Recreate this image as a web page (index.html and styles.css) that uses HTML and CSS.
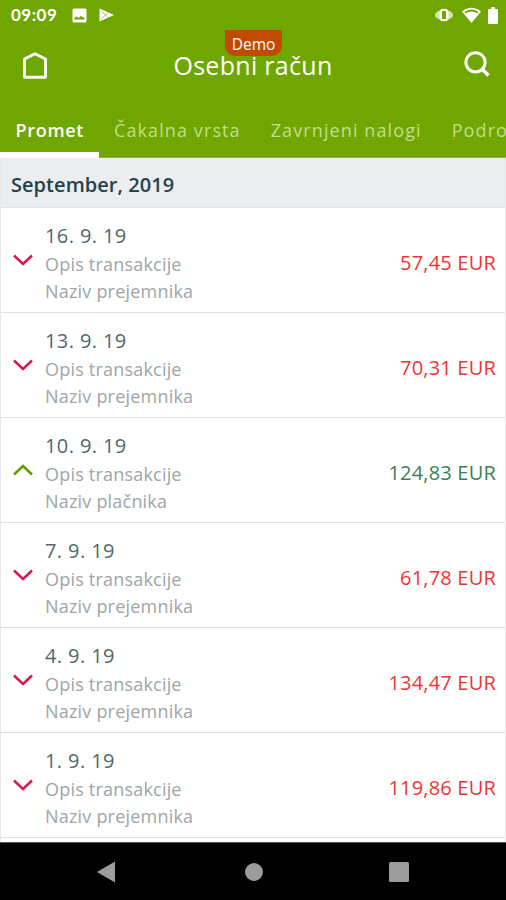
FILE: index.html
```html
<!DOCTYPE html>
<html lang="sl">
<head>
<meta charset="utf-8">
<title>Osebni račun</title>
<link rel="stylesheet" href="styles.css">
</head>
<body>
<header class="top">
  <div class="status">
    <span class="time">09:09</span>
    <svg class="pic" width="15" height="15" viewBox="0 0 15 15"><rect x=".5" y=".5" width="14" height="14" rx="1.5" fill="#fff"/><path d="M2.500 11.500V9.500l2-1 2 1.500 2.500-2 3.500 2v1.500z" fill="#70a600"/></svg>
    <svg class="play" width="15" height="14" viewBox="0 0 15 14"><path d="M.5.500 15 7 .5 13.500z" fill="#fff"/><path d="M2 2.500 9 9.500M2 11.500 9 4.500" stroke="#70a600" stroke-width=".9" opacity=".7"/></svg>
    <svg class="vib" width="18" height="14" viewBox="0 0 18 14"><path d="M5 2.500Q0 4 0 7t5 4.500zM13 2.500Q18 4 18 7t-5 4.500z" fill="#cfe2a8"/><rect x="4.500" y=".8" width="9" height="12.400" rx="3.500" fill="#fff"/><rect x="7" y="3" width="4" height="8" rx=".5" fill="#70a600"/></svg>
    <svg class="wifi" width="19" height="16" viewBox="0 0 19 16"><path d="M0 4.500Q9.500-3 19 4.500L9.500 16z" fill="#fff"/><path d="M3 5.800Q9.500 1.200 16 5.800" fill="none" stroke="#70a600" stroke-width="1.800"/></svg>
    <svg width="10" height="17" viewBox="0 0 10 17"><path d="M3 0h4v2h2q1 0 1 1v13q0 1-1 1H1q-1 0-1-1V3q0-1 1-1h2z" fill="#fff"/></svg>
  </div>
  <div class="bar">
    <svg width="24" height="27" viewBox="0 0 24 27"><path d="M1.500 7 12 1.700 22.500 7v18.200h-21z" fill="none" stroke="#fff" stroke-width="2.900" stroke-linejoin="round"/></svg>
    <h1 class="title">Osebni račun</h1>
    <svg class="search" width="26" height="26" viewBox="0 0 26 26" fill="none" stroke="#fff" stroke-width="3"><circle cx="11.500" cy="11.300" r="9.600"/><path d="m18 18 6.500 6.500" stroke-width="3.500"/></svg>
    <span class="demo">Demo</span>
  </div>
  <nav class="tabs">
    <a class="tab active">Promet</a>
    <a class="tab">Čakalna vrsta</a>
    <a class="tab">Zavrnjeni nalogi</a>
    <a class="tab">Podrobnosti</a>
  </nav>
</header>
<main class="list">
  <h2 class="month">September, 2019</h2>
  <div class="row"><svg class="chev" viewBox="0 0 20 12"><path d="m1 1.500 9 8.500 9-8.500"/></svg><div class="info"><p class="date">16. 9. 19</p><p>Opis transakcije</p><p>Naziv prejemnika</p></div><span class="amt">57,45 EUR</span></div>
  <div class="row"><svg class="chev" viewBox="0 0 20 12"><path d="m1 1.500 9 8.500 9-8.500"/></svg><div class="info"><p class="date">13. 9. 19</p><p>Opis transakcije</p><p>Naziv prejemnika</p></div><span class="amt">70,31 EUR</span></div>
  <div class="row in"><svg class="chev" viewBox="0 0 20 12"><path d="m1 10.500 9-8.500 9 8.500"/></svg><div class="info"><p class="date">10. 9. 19</p><p>Opis transakcije</p><p>Naziv plačnika</p></div><span class="amt">124,83 EUR</span></div>
  <div class="row"><svg class="chev" viewBox="0 0 20 12"><path d="m1 1.500 9 8.500 9-8.500"/></svg><div class="info"><p class="date">7. 9. 19</p><p>Opis transakcije</p><p>Naziv prejemnika</p></div><span class="amt">61,78 EUR</span></div>
  <div class="row"><svg class="chev" viewBox="0 0 20 12"><path d="m1 1.500 9 8.500 9-8.500"/></svg><div class="info"><p class="date">4. 9. 19</p><p>Opis transakcije</p><p>Naziv prejemnika</p></div><span class="amt">134,47 EUR</span></div>
  <div class="row"><svg class="chev" viewBox="0 0 20 12"><path d="m1 1.500 9 8.500 9-8.500"/></svg><div class="info"><p class="date">1. 9. 19</p><p>Opis transakcije</p><p>Naziv prejemnika</p></div><span class="amt">119,86 EUR</span></div>
</main>
<footer class="nav">
  <svg width="18" height="22" viewBox="0 0 18 22"><path d="M0 11 18 .5v21z"/></svg>
  <svg width="18" height="18" viewBox="0 0 18 18"><circle cx="9" cy="9" r="9"/></svg>
  <svg width="20" height="20" viewBox="0 0 20 20"><rect width="20" height="20" rx="1.500"/></svg>
</footer>
</body>
</html>
```
FILE: styles.css
```css
* { box-sizing: border-box; margin: 0; padding: 0; }
body { width: 506px; height: 900px; overflow: hidden; display: flex; flex-direction: column; background: #fff; font-family: "Open Sans", "Noto Sans", sans-serif; }
svg { display: block; flex: none; }
.top { height: 158px; flex: none; background: #70a600; color: #fff; border-bottom: 1px solid #8fae5a; }
.status { height: 30px; display: flex; align-items: center; padding: 0 8px 0 11px; }
.time { width: 61px; font: 700 17px/30px Lato, sans-serif; letter-spacing: .5px; }
.play { margin-left: 12px; }
.vib { margin-left: auto; }
.wifi { margin: 0 7px 0 9px; }
.bar { position: relative; z-index: 0; height: 70px; display: flex; align-items: center; justify-content: space-between; padding: 0 16px 0 23px; }
.title { font-size: 25px; font-weight: 400; letter-spacing: .3px; line-height: 30px; margin: -1px 0 0 -5px; }
.search { margin-top: -2px; }
.demo { position: absolute; left: 225px; top: 0; width: 57px; height: 26px; background: #c24a00; border-radius: 0 0 10px 10px; font-size: 15.5px; line-height: 28px; text-align: center; z-index: -1; }
.tabs { height: 58px; display: flex; overflow: hidden; }
.tab { flex: none; height: 58px; padding: 0 14.5px 0 15.5px; font-size: 18px; line-height: 61px; letter-spacing: 1.1px; white-space: nowrap; color: #c2dd90; }
.active { width: 98.5px; color: #fff; font-weight: 600; letter-spacing: .7px; border-bottom: 6px solid #fff; }
.list { flex: 1; min-height: 0; border-left: 1px solid #e6e8e9; border-right: 1px solid #e6e8e9; }
.month { height: 50px; background: #ebedee; border-bottom: 1px solid #dfe1e3; padding-left: 10px; font-size: 20px; line-height: 53px; font-weight: 600; color: #24434f; letter-spacing: .05px; }
.row { height: 105px; display: flex; border-bottom: 1px solid #dfe2e3; padding: 13px 9px 0 12px; }
.chev { width: 20px; height: 12px; margin: 33px 12px 0 0; fill: none; stroke: #dc174f; stroke-width: 2.5; }
.in .chev { stroke: #609c00; }
.info { flex: 1; color: #9da5a9; font-size: 18px; line-height: 27px; letter-spacing: .2px; }
.info .date { color: #52666e; font-size: 20px; line-height: 30px; letter-spacing: .4px; }
.amt { color: #f03434; font-size: 20px; line-height: 84px; letter-spacing: .2px; }
.in .amt { color: #3b8052; }
.nav { height: 58px; flex: none; background: #000; border-top: 1px solid #555; display: flex; align-items: center; padding-left: 97px; fill: #9c9c9c; }
.nav svg + svg { margin-left: 130px; }
.nav svg:last-child { margin-left: 126px; }
```
